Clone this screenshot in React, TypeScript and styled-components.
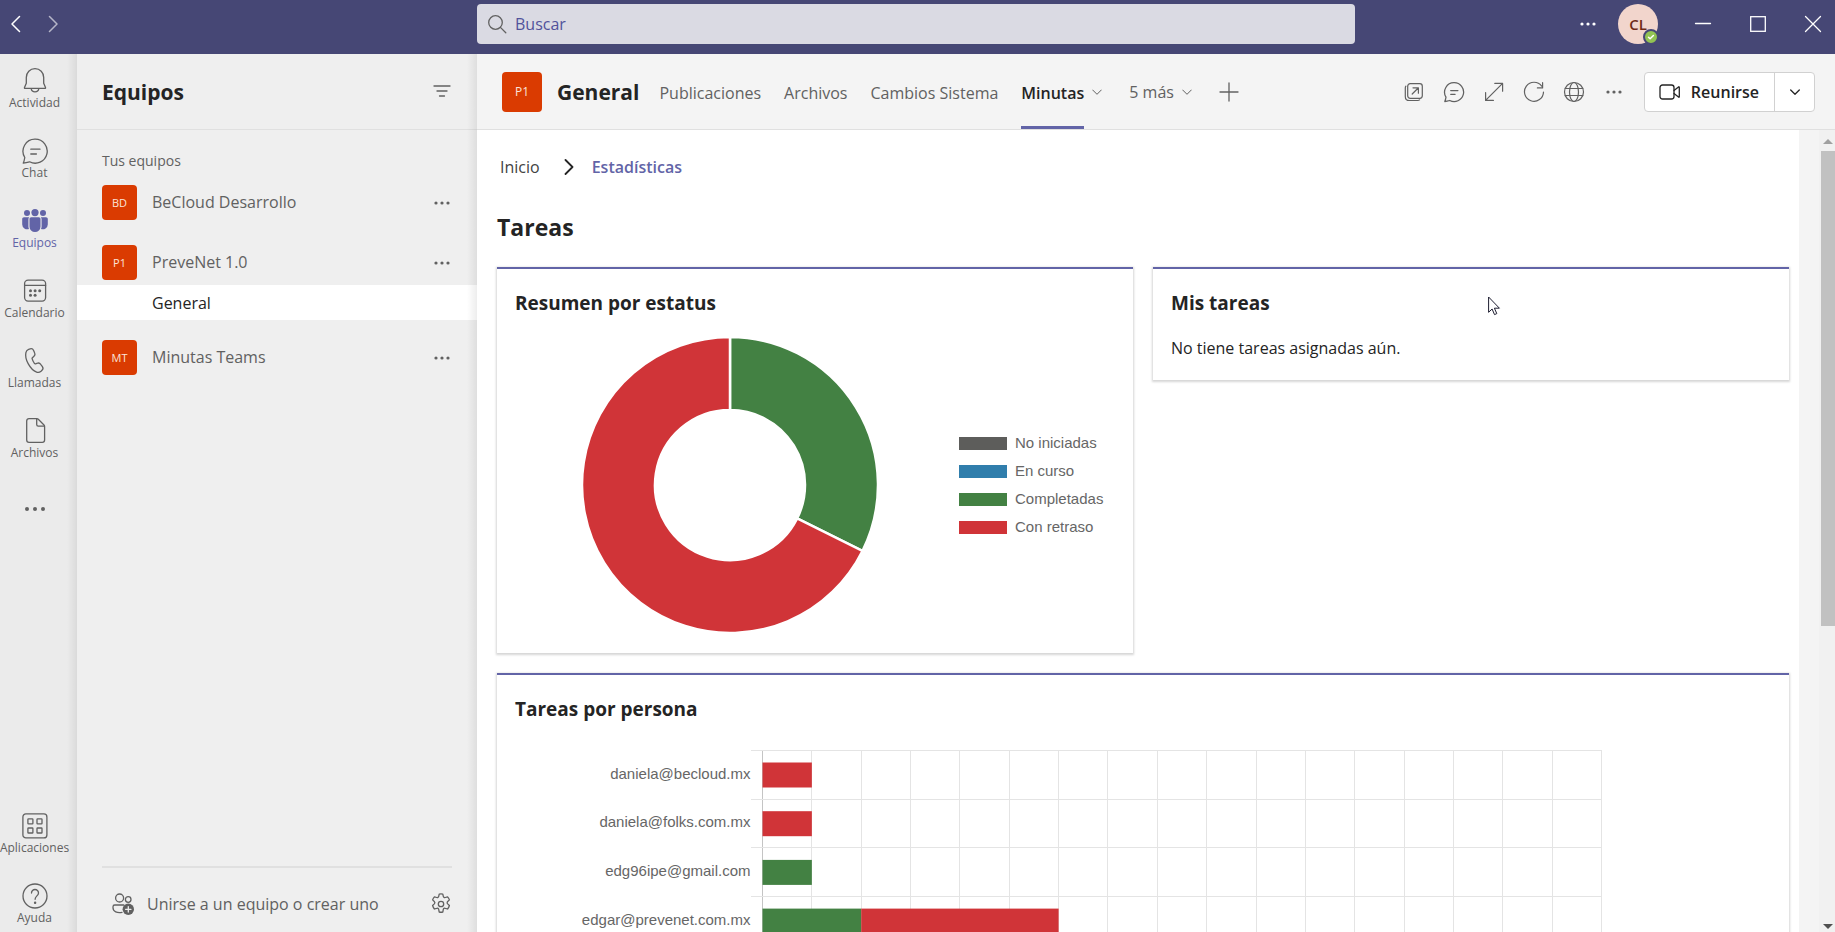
import React from "react";
import styled, { createGlobalStyle, css } from "styled-components";

const color = {
  brand: "#6264a7",
  title: "#464775",
  ink: "#242424",
  muted: "#616161",
  line: "#e0e0e0",
  tile: "#da3b01",
  gray: "#5d5d5b",
  blue: "#307eac",
  green: "#438143",
  red: "#d03438",
};

const Global = createGlobalStyle`
  *, *::before, *::after { box-sizing: border-box; }
  body {
    margin: 0;
    overflow: hidden;
    font-family: "Open Sans", "Segoe UI", sans-serif;
    font-size: 16px;
    color: ${color.ink};
    background: #fff;
  }
  button {
    font: inherit;
    color: inherit;
    background: none;
    border: 0;
    padding: 0;
    cursor: pointer;
  }
  a { color: inherit; text-decoration: none; }
  h1, h2, h3, p, ul, ol { margin: 0; padding: 0; }
  ul, ol { list-style: none; }
  svg { display: block; flex: none; }
`;

const Shell = styled.div`
  display: flex;
  flex-direction: column;
  height: 100vh;
`;

/* Title bar */
const TitleBar = styled.header`
  display: grid;
  grid-template-columns: 477px 1fr 480px;
  flex: none;
  height: 54px;
  background: ${color.title};
  color: #fff;
`;
const HistoryNav = styled.nav`
  display: flex;
  align-items: center;
  gap: 9px;
  height: 48px;
  padding-left: 2px;
`;
const HistoryButton = styled.button<{ $dim?: boolean }>`
  display: grid;
  place-items: center;
  width: 28px;
  height: 28px;
  opacity: ${(p) => (p.$dim ? 0.6 : 1)};
`;
const SearchBox = styled.label`
  display: flex;
  align-items: center;
  gap: 8px;
  height: 40px;
  margin-top: 4px;
  padding: 0 10px;
  border-radius: 4px;
  background: #dadae3;
  color: ${color.muted};
`;
const SearchInput = styled.input`
  flex: 1;
  min-width: 0;
  padding: 0;
  border: 0;
  outline: 0;
  background: transparent;
  font: inherit;
  color: ${color.title};
  &::placeholder { color: #51529b; opacity: 1; }
`;
const WindowArea = styled.div`
  display: flex;
  align-items: center;
  justify-content: flex-end;
  height: 48px;
`;
const MoreButton = styled.button`
  display: grid;
  place-items: center;
  width: 28px;
  height: 28px;
`;
const Account = styled.button`
  position: relative;
  width: 40px;
  height: 40px;
  margin: 0 23px 0 16px;
  border-radius: 50%;
  background: #f2d5cc;
  color: #6f2a17;
  font-size: 15px;
  font-weight: 600;
`;
const Presence = styled.span`
  position: absolute;
  right: -1px;
  bottom: -1px;
  display: grid;
  place-items: center;
  width: 16px;
  height: 16px;
  border: 2px solid ${color.title};
  border-radius: 50%;
  background: #92c353;
  color: #fff;
`;
const WindowButtons = styled.div`
  display: flex;
  gap: 11px;
`;
const WindowButton = styled.button`
  display: grid;
  place-items: center;
  width: 44px;
  height: 40px;
`;

/* Left rail */
const Body = styled.div`
  display: flex;
  flex: 1;
  min-height: 0;
`;
const edgeShade = css`
  background-image: linear-gradient(to left, rgba(0, 0, 0, 0.07), rgba(0, 0, 0, 0));
  background-size: 10px 100%;
  background-position: right top;
  background-repeat: no-repeat;
`;
const Rail = styled.nav`
  display: flex;
  flex-direction: column;
  justify-content: space-between;
  flex: none;
  width: 77px;
  padding: 0 8px 6px 0;
  background-color: #ebebeb;
  ${edgeShade}
`;
const RailList = styled.ul`
  display: flex;
  flex-direction: column;
  gap: 13px;
`;
const RailButton = styled.button<{ $active?: boolean; $iconOnly?: boolean }>`
  display: flex;
  flex-direction: column;
  align-items: center;
  width: 100%;
  height: 57px;
  padding-top: ${(p) => (p.$iconOnly ? "21px" : "13px")};
  color: ${(p) => (p.$active ? color.brand : color.muted)};
`;
const RailIcon = styled.span`
  display: grid;
  place-items: center;
  width: 28px;
  height: 28px;
`;
const RailLabel = styled.span`
  font-size: 12px;
  line-height: 16px;
  white-space: nowrap;
`;

/* Teams panel */
const Panel = styled.aside`
  display: flex;
  flex-direction: column;
  flex: none;
  width: 400px;
  background: #efefef;
  position: relative;
  &::after {
    content: "";
    position: absolute;
    inset: 0 0 0 auto;
    width: 10px;
    background: linear-gradient(to left, rgba(0, 0, 0, 0.07), rgba(0, 0, 0, 0));
  }
`;
const PanelHeader = styled.div`
  display: flex;
  align-items: center;
  justify-content: space-between;
  height: 76px;
  padding: 0 26px 0 25px;
  border-bottom: 1px solid ${color.line};
  color: ${color.muted};
`;
const PanelTitle = styled.h1`
  font-size: 21px;
  line-height: 28px;
  font-weight: 700;
  color: ${color.ink};
`;
const GroupLabel = styled.h2`
  padding: 20px 25px 0;
  font-size: 14px;
  line-height: 22px;
  font-weight: 400;
  color: ${color.muted};
`;
const TeamRow = styled.li<{ $afterChannels?: boolean }>`
  display: flex;
  align-items: center;
  gap: 15px;
  height: 35px;
  margin: ${(p) => (p.$afterChannels ? "20px" : "13px")} 21px 25px 25px;
  color: ${color.muted};
  &:has(+ [data-channel]) { margin-bottom: 5px; }
`;
const TeamList = styled.ul`
  flex: 1;
`;
const TeamName = styled.span`
  flex: 1;
  padding-bottom: 2px;
  line-height: 24px;
`;
const Tile = styled.span<{ $size: number }>`
  display: grid;
  place-items: center;
  flex: none;
  width: ${(p) => p.$size}px;
  height: ${(p) => p.$size}px;
  border-radius: 4px;
  background: ${color.tile};
  color: #fbe3d9;
  font-size: ${(p) => (p.$size > 35 ? 12 : 11)}px;
`;
const ChannelRow = styled.li`
  height: 35px;
  padding-left: 75px;
  background: #fff;
  line-height: 36px;
`;
const PanelFooter = styled.div`
  display: flex;
  align-items: center;
  height: 66px;
  margin: 0 25px;
  padding: 8px 0 0 9px;
  border-top: 2px solid ${color.line};
  color: ${color.muted};
`;
const JoinButton = styled.button`
  display: flex;
  align-items: center;
  flex: 1;
  gap: 12px;
  text-align: left;
`;

/* Main column */
const Main = styled.main`
  display: flex;
  flex-direction: column;
  flex: 1;
  min-width: 0;
`;
const ChannelHeader = styled.div`
  display: flex;
  align-items: center;
  flex: none;
  height: 76px;
  padding: 0 20px 0 25px;
  border-bottom: 1px solid ${color.line};
  background: #f4f4f4;
`;
const ChannelName = styled.h2`
  margin: 0 20px 0 15px;
  font-size: 21px;
  line-height: 28px;
  font-weight: 700;
`;
const Tabs = styled.nav`
  display: flex;
  align-self: stretch;
  gap: 23px;
  flex: 1;
  color: ${color.muted};
`;
const Tab = styled.a<{ $active?: boolean }>`
  display: flex;
  align-items: center;
  padding-top: 3px;
  white-space: nowrap;
  ${(p) =>
    p.$active &&
    css`
      font-weight: 600;
      color: ${color.ink};
      box-shadow: inset 0 -3px ${color.brand};
    `}
`;
const TabGroup = styled.span`
  display: flex;
  gap: 8px;
  margin-right: 4px;
`;
const TabMenu = styled.button`
  display: flex;
  align-items: center;
  gap: 8px;
  white-space: nowrap;
`;
const Tools = styled.div`
  display: flex;
  gap: 12px;
  margin-right: 16px;
  color: ${color.muted};
`;
const MeetGroup = styled.div`
  display: flex;
  height: 40px;
  border: 1px solid #d1d1d1;
  border-radius: 4px;
  background: #fff;
`;
const MeetButton = styled.button`
  display: flex;
  align-items: center;
  gap: 10px;
  padding: 0 15px 0 14px;
  font-weight: 600;
`;
const MeetMenu = styled.button`
  display: grid;
  place-items: center;
  width: 40px;
  border-left: 1px solid #d1d1d1;
`;

/* Tab content */
const Viewport = styled.div`
  display: flex;
  flex: 1;
  min-height: 0;
`;
const Page = styled.div`
  flex: 1;
  min-width: 0;
  padding: 25px 10px 0 20px;
  overflow: hidden;
`;
const Gutter = styled.div`
  width: 20px;
  background: #f4f4f4;
`;
const ScrollTrack = styled.div`
  display: flex;
  flex-direction: column;
  align-items: center;
  width: 16px;
  padding: 8px 0 2px 2px;
  background: #f1f1f1;
`;
const ScrollThumb = styled.div`
  flex: 0 0 60%;
  width: 14px;
  margin: 7px 0 auto;
  background: #c1c1c1;
`;
const Crumbs = styled.ol`
  display: flex;
  align-items: center;
  height: 24px;
  gap: 24px;
  padding-left: 3px;
  font-weight: 500;
  color: #424242;
`;
const CrumbItem = styled.li<{ $current?: boolean }>`
  display: flex;
  align-items: center;
  gap: 18px;
  line-height: 24px;
  ${(p) => p.$current && css`font-weight: 600; color: ${color.brand};`}
`;
const PageTitle = styled.h2`
  margin: 32px 0 24px;
  font-size: 23px;
  line-height: 32px;
  font-weight: 700;
`;
const Cards = styled.div`
  display: grid;
  grid-template-columns: 1fr 1fr;
  align-items: start;
  gap: 20px;
`;
const Card = styled.section<{ $wide?: boolean }>`
  position: relative;
  min-width: 0;
  padding: 20px 18px;
  border-top: 2px solid ${color.brand};
  background: #fff;
  box-shadow: 0 1px 2px 1px rgba(0, 0, 0, 0.16);
  ${(p) => p.$wide && css`grid-column: 1 / -1;`}
`;
const CardTitle = styled.h3`
  margin-bottom: 20px;
  font-size: 19px;
  line-height: 28px;
  font-weight: 700;
`;
const CardText = styled.p`
  line-height: 23px;
`;
const StatusChart = styled.div`
  display: flex;
  align-items: center;
`;
const DonutArea = styled.div`
  display: flex;
  justify-content: center;
  flex: 1;
`;
const Legend = styled.ul`
  display: grid;
  gap: 8px;
  width: 171px;
  padding: 0 0 0 15px;
`;
const LegendItem = styled.li`
  display: flex;
  align-items: center;
  gap: 8px;
  font: 15px/20px "Liberation Sans", Arial, sans-serif;
  color: #666;
`;
const Swatch = styled.span<{ $color: string }>`
  width: 48px;
  height: 13px;
  background: ${(p) => p.$color};
`;
const BarSvg = styled.svg`
  width: 100%;
  height: auto;
  text {
    font: 15px "Liberation Sans", Arial, sans-serif;
    fill: #666;
    text-anchor: end;
  }
`;
const Pointer = styled.svg`
  position: absolute;
  top: 27px;
  left: 335px;
`;

/* Icons */
type IconProps = { w: number; h?: number; sw?: number; children: React.ReactNode };
const Icon = ({ w, h = w, sw = 1.3, children }: IconProps) => (
  <svg
    width={w}
    height={h}
    viewBox={`0 0 ${w} ${h}`}
    fill="none"
    stroke="currentColor"
    strokeWidth={sw}
    strokeLinecap="round"
    strokeLinejoin="round"
    aria-hidden="true"
  >
    {children}
  </svg>
);

const Dots = ({ gap = 6, r = 1.6 }: { gap?: number; r?: number }) => (
  <Icon w={22} h={6}>
    <g fill="currentColor" stroke="none">
      <circle cx={11 - gap} cy={3} r={r} />
      <circle cx={11} cy={3} r={r} />
      <circle cx={11 + gap} cy={3} r={r} />
    </g>
  </Icon>
);
const ChevronDown = ({ sw = 1 }: { sw?: number }) => (
  <Icon w={10} h={8} sw={sw}>
    <path d="M.7 2 5 6.3 9.3 2" />
  </Icon>
);
const ChatIcon = ({ size = 28, sw = 1.3 }: { size?: number; sw?: number }) => (
  <svg width={size} height={size} viewBox="0 0 28 28" fill="none" stroke="currentColor" strokeWidth={sw} strokeLinecap="round" strokeLinejoin="round" aria-hidden="true">
    <path d="M14.3 2.2A12 12 0 1 1 8.6 24.8c-2 .5-4.2 1-6.3 1.3.8-1.8 1.2-3.8 1.5-5.6A12 12 0 0 1 14.3 2.2Z" />
    <path d="M9.8 12.2h9.2M9.8 17h5.6" />
  </svg>
);
const BellIcon = () => (
  <Icon w={28}>
    <path d="M14 1.7c-5 0-8.7 3.8-8.7 8.8v5.8L3.5 20.6c-.2.5 0 .8.5.8h20c.5 0 .7-.3.5-.8l-1.8-4.3v-5.8c0-5-3.7-8.8-8.7-8.8Z" />
    <path d="M10.2 21.6c.3 2 1.8 3.2 3.8 3.2s3.5-1.2 3.8-3.2" />
  </Icon>
);
const TeamsIcon = () => (
  <Icon w={28}>
    <g fill="currentColor" stroke="none">
      <circle cx="14" cy="5.6" r="3.6" />
      <circle cx="6" cy="6" r="3" />
      <circle cx="22" cy="6" r="3" />
      <path d="M10.2 10.3h7.6c1 0 1.7.8 1.7 1.7v7.6a5.5 5.5 0 0 1-11 0V12c0-1 .8-1.7 1.7-1.7Z" />
      <path d="M3 10.3h5.2c-.6.5-.8 1.2-.8 2v7.2c0 1 .2 1.8.6 2.5A5 5 0 0 1 1.2 17.5V12c0-1 .8-1.7 1.8-1.7ZM25 10.3h-5.200c.6.5.8 1.2.8 2v7.2c0 1-.2 1.8-.6 2.5a5 5 0 0 0 6.8-4.5V12c0-1-.8-1.7-1.8-1.7Z" />
    </g>
  </Icon>
);
const CalendarIcon = () => (
  <Icon w={28}>
    <rect x="3.6" y="3.1" width="21" height="21" rx="3.5" />
    <path d="M3.6 8.4h21" />
    <g fill="currentColor" stroke="none">
      <circle cx="9.5" cy="13.8" r="1.5" /><circle cx="14.1" cy="13.8" r="1.5" /><circle cx="18.7" cy="13.8" r="1.5" />
      <circle cx="9.5" cy="18.3" r="1.5" /><circle cx="14.1" cy="18.3" r="1.5" />
    </g>
  </Icon>
);
const PhoneIcon = () => (
  <Icon w={28}>
    <path d="m7.600 2.300 1.600-.5c1.400-.4 2.800.3 3.400 1.600l1.100 2.600c.5 1.100.2 2.400-.7 3.200l-1.600 1.500c-.3.300-.4.700-.3 1 .5 1.800 1.300 3.400 2.300 4.700.3.400.7.600 1.100.4l2-.6c1.200-.4 2.500.1 3.200 1.100l1.700 2.300c.8 1.100.6 2.700-.4 3.600l-1 1c-1.200 1.100-2.900 1.500-4.400.9-3.300-1.200-6.100-4.200-8.300-8.200C5 12.800 4.200 8.900 4.900 5.600 5.200 4 6.200 2.800 7.600 2.300Z" />
  </Icon>
);
const FileIcon = () => (
  <Icon w={28}>
    <path d="M8 1.700h7.800c.6 0 1.100.2 1.500.6l5.700 5.700c.4.400.6.900.6 1.500V23c0 1.400-.9 2.300-2.300 2.300H8c-1.400 0-2.300-.9-2.300-2.300V4c0-1.400.9-2.300 2.300-2.300Z" />
    <path d="M15.700 2v5.500c0 1 .6 1.600 1.600 1.600h5.800" />
  </Icon>
);
const AppsIcon = () => (
  <Icon w={28}>
    <rect x="1.9" y="1.9" width="24" height="24" rx="3" />
    <rect x="6.9" y="6.9" width="5" height="5" rx=".6" /><rect x="16" y="6.9" width="5" height="5" rx=".6" />
    <rect x="6.9" y="16" width="5" height="5" rx=".6" /><rect x="16" y="16" width="5" height="5" rx=".6" />
  </Icon>
);
const HelpIcon = () => (
  <Icon w={28}>
    <circle cx="14" cy="14" r="12" />
    <path d="M10.500 11a3.500 3.500 0 1 1 7 0c0 2.800-3.400 3-3.400 6.300" />
    <circle cx="14.100" cy="20.800" r=".6" fill="currentColor" />
  </Icon>
);
const FilterIcon = () => (
  <Icon w={18} h={14}>
    <path d="M1 1h16M4 6h10M6.500 11h5" />
  </Icon>
);
const JoinIcon = () => (
  <Icon w={24}>
    <circle cx="8.6" cy="6" r="4" /><circle cx="17.2" cy="7.5" r="2.8" />
    <path d="M11 20.400c-4.700.8-9-.6-9-4.600v-1c0-1.100.8-1.800 1.800-1.800h9" />
    <circle cx="17.3" cy="17.3" r="5.7" fill="currentColor" stroke="none" />
    <path d="M17.300 14.600V20M14.600 17.300H20" stroke="#efefef" />
  </Icon>
);
const GearIcon = () => (
  <Icon w={22}>
    <circle cx="11" cy="11" r="2.7" />
    <path d="M9.200 1.100a10 10 0 0 1 3.600 0l.5 2.300c.2.900 1.100 1.400 2 1.100l2.300-.7a10 10 0 0 1 1.800 3.100l-1.700 1.600c-.7.700-.7 1.700 0 2.400l1.700 1.600a10 10 0 0 1-1.800 3.500l-2.300-.7c-.9-.3-1.800.2-2 1.100l-.5 2.700a10 10 0 0 1-3.600 0l-.5-2.700c-.2-.9-1.100-1.400-2-1.100l-2.300.7a10 10 0 0 1-1.800-3.500l1.700-1.600c.7-.7.7-1.700 0-2.400L2.600 6.900a10 10 0 0 1 1.800-3.100l2.300.7c.9.300 1.800-.2 2-1.100Z" />
  </Icon>
);
const PopOutIcon = () => (
  <Icon w={28} sw={1.2}>
    <rect x="7.7" y="5.7" width="14.6" height="14.6" rx="2.5" />
    <path d="M5.900 8.200c-.4.500-.6 1-.6 1.700v8.500c0 2.500 1.600 4.100 4.100 4.100h8.500c.7 0 1.200-.2 1.700-.6" />
    <path d="m12.200 16 6-6M13 9.800h5.400v5.400" />
  </Icon>
);
const ExpandIcon = () => (
  <Icon w={28} sw={1.2}>
    <path d="m5.600 22.400 17-17M14.800 5.400h7.800v7.800M5.600 14.600v7.800h7.800" />
  </Icon>
);
const RefreshIcon = () => (
  <Icon w={28} sw={1.2}>
    <path d="M21.700 8.200A9.500 9.500 0 1 0 23.500 14" />
    <path d="M22.600 4.700v5.200h-5.200" />
  </Icon>
);
const GlobeIcon = () => (
  <Icon w={28} sw={1.2}>
    <circle cx="14" cy="14" r="9.5" /><ellipse cx="14" cy="14" rx="4.5" ry="9.5" />
    <path d="M5.200 10.500h17.600M5.200 17.500h17.600" />
  </Icon>
);
const VideoIcon = () => (
  <Icon w={22} h={18}>
    <rect x="1" y="2" width="14" height="14" rx="2.5" />
    <path d="m15 7.500 4.500-3.600c.4-.3.800-.1.800.4v9.400c0 .5-.4.700-.8.400L15 10.500" />
  </Icon>
);

/* Data */
const railTop = [
  { label: "Actividad", icon: <BellIcon /> },
  { label: "Chat", icon: <ChatIcon /> },
  { label: "Equipos", icon: <TeamsIcon />, active: true },
  { label: "Calendario", icon: <CalendarIcon /> },
  { label: "Llamadas", icon: <PhoneIcon /> },
  { label: "Archivos", icon: <FileIcon /> },
];
const railBottom = [
  { label: "Aplicaciones", icon: <AppsIcon /> },
  { label: "Ayuda", icon: <HelpIcon /> },
];
const statuses = [
  { label: "No iniciadas", color: color.gray },
  { label: "En curso", color: color.blue },
  { label: "Completadas", color: color.green },
  { label: "Con retraso", color: color.red },
];
const people = [
  { email: "daniela@becloud.mx", done: 0, late: 1 },
  { email: "daniela@folks.com.mx", done: 0, late: 1 },
  { email: "edg96ipe@gmail.com", done: 1, late: 0 },
  { email: "edgar@prevenet.com.mx", done: 2, late: 4 },
];

const tools: [string, React.ReactNode][] = [
  ["Abrir en ventana", <PopOutIcon />],
  ["Conversación", <ChatIcon size={22} sw={1.6} />],
  ["Expandir", <ExpandIcon />],
  ["Actualizar", <RefreshIcon />],
  ["Abrir en el navegador", <GlobeIcon />],
  ["Más opciones", <Dots />],
];

const RailItems = ({ items }: { items: { label: string; icon: React.ReactNode; active?: boolean }[] }) => (
  <>
    {items.map((item) => (
      <li key={item.label}>
        <RailButton $active={item.active}>
          <RailIcon>{item.icon}</RailIcon>
          <RailLabel>{item.label}</RailLabel>
        </RailButton>
      </li>
    ))}
  </>
);

const Team = ({ code, name, afterChannels }: { code: string; name: string; afterChannels?: boolean }) => (
  <TeamRow $afterChannels={afterChannels}>
    <Tile $size={35}>{code}</Tile>
    <TeamName>{name}</TeamName>
    <MoreButton aria-label={`Más opciones de ${name}`}><Dots /></MoreButton>
  </TeamRow>
);

const Donut = () => {
  const c = 148;
  const inner = 75;
  const end = (11 / 34) * 2 * Math.PI;
  const at = (r: number, a: number) => `${c + r * Math.sin(a)} ${c - r * Math.cos(a)}`;
  const slice = (a: number, b: number) => {
    const big = b - a > Math.PI ? 1 : 0;
    return `M${at(c, a)}A${c} ${c} 0 ${big} 1 ${at(c, b)}L${at(inner, b)}A${inner} ${inner} 0 ${big} 0 ${at(inner, a)}Z`;
  };
  return (
    <svg width="296" height="296" viewBox="0 0 296 296" stroke="#fff" strokeWidth="2.5" role="img" aria-label="Resumen por estatus">
      <path d={slice(0, end)} fill={color.green} />
      <path d={slice(end, 2 * Math.PI)} fill={color.red} />
    </svg>
  );
};

const PeopleChart = () => {
  const left = 247.5;
  const right = 1086.5;
  const top = 7.5;
  const units = 17;
  const step = (right - left) / units;
  const row = 48.7;
  return (
    <BarSvg viewBox="0 0 1256 300" role="img" aria-label="Tareas por persona">
      <g stroke="#e4e4e4" shapeRendering="crispEdges">
        {Array.from({ length: units + 1 }, (_, i) => (
          <line key={i} x1={left + i * step} x2={left + i * step} y1={top} y2={300} stroke={i ? undefined : "#c4c4c4"} />
        ))}
        {Array.from({ length: 6 }, (_, i) => (
          <line key={i} x1={left - 12} x2={right} y1={top + i * row} y2={top + i * row} />
        ))}
      </g>
      {people.map((p, i) => {
        const y = top + i * row + 12;
        return (
          <g key={p.email}>
            <text x={left - 12} y={top + i * row + 28}>{p.email}</text>
            <rect x={left} y={y} width={p.done * step} height={25} fill={color.green} />
            <rect x={left + p.done * step} y={y} width={p.late * step} height={25} fill={color.red} />
          </g>
        );
      })}
    </BarSvg>
  );
};

export default function App() {
  return (
    <Shell>
      <Global />
      <TitleBar>
        <HistoryNav aria-label="Historial">
          <HistoryButton aria-label="Atrás">
            <Icon w={10} h={18} sw={1.5}><path d="M8.500 1.500 1 9l7.500 7.500" /></Icon>
          </HistoryButton>
          <HistoryButton aria-label="Adelante" $dim>
            <Icon w={10} h={18} sw={1.5}><path d="M1.500 1.500 9 9l-7.500 7.500" /></Icon>
          </HistoryButton>
        </HistoryNav>
        <SearchBox>
          <Icon w={20}><circle cx="8.5" cy="8.5" r="6.8" /><path d="m13.400 13.400 5.400 5.400" /></Icon>
          <SearchInput type="text" placeholder="Buscar" aria-label="Buscar" />
        </SearchBox>
        <WindowArea>
          <MoreButton aria-label="Configuración y más"><Dots /></MoreButton>
          <Account aria-label="Cuenta CL">
            CL
            <Presence>
              <Icon w={8} sw={1.5}><path d="m1.500 4.200 1.600 1.600 3.300-3.300" /></Icon>
            </Presence>
          </Account>
          <WindowButtons>
            <WindowButton aria-label="Minimizar"><Icon w={18}><path d="M1.500 8.500h15" /></Icon></WindowButton>
            <WindowButton aria-label="Maximizar"><Icon w={18}><rect x="1.7" y="1.7" width="14.6" height="14.6" strokeLinejoin="miter" /></Icon></WindowButton>
            <WindowButton aria-label="Cerrar"><Icon w={18}><path d="m1.500 1.500 15 15M16.500 1.500l-15 15" /></Icon></WindowButton>
          </WindowButtons>
        </WindowArea>
      </TitleBar>

      <Body>
        <Rail aria-label="Aplicaciones de Teams">
          <RailList>
            <RailItems items={railTop} />
            <li>
              <RailButton $iconOnly aria-label="Más aplicaciones">
                <RailIcon><Dots gap={8} r={2} /></RailIcon>
              </RailButton>
            </li>
          </RailList>
          <RailList><RailItems items={railBottom} /></RailList>
        </Rail>

        <Panel>
          <PanelHeader>
            <PanelTitle>Equipos</PanelTitle>
            <button aria-label="Filtrar"><FilterIcon /></button>
          </PanelHeader>
          <GroupLabel>Tus equipos</GroupLabel>
          <TeamList>
            <Team code="BD" name="BeCloud Desarrollo" />
            <Team code="P1" name="PreveNet 1.0" />
            <ChannelRow data-channel><a href="#general">General</a></ChannelRow>
            <Team code="MT" name="Minutas Teams" afterChannels />
          </TeamList>
          <PanelFooter>
            <JoinButton><JoinIcon />Unirse a un equipo o crear uno</JoinButton>
            <button aria-label="Administrar equipos"><GearIcon /></button>
          </PanelFooter>
        </Panel>

        <Main>
          <ChannelHeader>
            <Tile $size={40}>P1</Tile>
            <ChannelName>General</ChannelName>
            <Tabs>
              <Tab href="#publicaciones">Publicaciones</Tab>
              <Tab href="#archivos">Archivos</Tab>
              <Tab href="#cambios">Cambios Sistema</Tab>
              <TabGroup>
                <Tab href="#minutas" $active>Minutas</Tab>
                <TabMenu aria-label="Opciones de Minutas"><ChevronDown /></TabMenu>
              </TabGroup>
              <TabGroup>
                <TabMenu>5 más <ChevronDown /></TabMenu>
              </TabGroup>
              <TabMenu aria-label="Agregar una pestaña">
                <Icon w={20}><path d="M10 1v18M1 10h18" /></Icon>
              </TabMenu>
            </Tabs>
            <Tools>
              {tools.map(([label, icon]) => (
                <MoreButton key={label} aria-label={label}>{icon}</MoreButton>
              ))}
            </Tools>
            <MeetGroup>
              <MeetButton><VideoIcon />Reunirse</MeetButton>
              <MeetMenu aria-label="Opciones de reunión"><ChevronDown sw={1.3} /></MeetMenu>
            </MeetGroup>
          </ChannelHeader>

          <Viewport>
            <Page>
              <Crumbs>
                <CrumbItem>
                  <a href="#inicio">Inicio</a>
                </CrumbItem>
                <CrumbItem $current>
                  <Icon w={10} h={16} sw={1.8}><path d="m1.500 1 7 7-7 7" stroke={color.ink} /></Icon>
                  <a href="#estadisticas">Estadísticas</a>
                </CrumbItem>
              </Crumbs>
              <PageTitle>Tareas</PageTitle>
              <Cards>
                <Card>
                  <CardTitle>Resumen por estatus</CardTitle>
                  <StatusChart>
                    <DonutArea><Donut /></DonutArea>
                    <Legend>
                      {statuses.map((s) => (
                        <LegendItem key={s.label}><Swatch $color={s.color} />{s.label}</LegendItem>
                      ))}
                    </Legend>
                  </StatusChart>
                </Card>
                <Card>
                  <CardTitle>Mis tareas</CardTitle>
                  <CardText>No tiene tareas asignadas aún.</CardText>
                  <Pointer width="13" height="20" viewBox="0 0 13 20" fill="#fff" stroke="#1d1d30" aria-hidden="true">
                    <path d="M.6 1v15.300l3.500-3.300 2.400 5.600 2.300-1-2.400-5.400h5L.6 1Z" />
                  </Pointer>
                </Card>
                <Card $wide>
                  <CardTitle>Tareas por persona</CardTitle>
                  <PeopleChart />
                </Card>
              </Cards>
            </Page>
            <Gutter />
            <ScrollTrack aria-hidden="true">
              <svg width="10" height="6"><path d="M0 6 5 1l5 5Z" fill="#a0a0a0" /></svg>
              <ScrollThumb />
              <svg width="10" height="6"><path d="M0 0 5 5l5-5Z" fill="#505050" /></svg>
            </ScrollTrack>
          </Viewport>
        </Main>
      </Body>
    </Shell>
  );
}
